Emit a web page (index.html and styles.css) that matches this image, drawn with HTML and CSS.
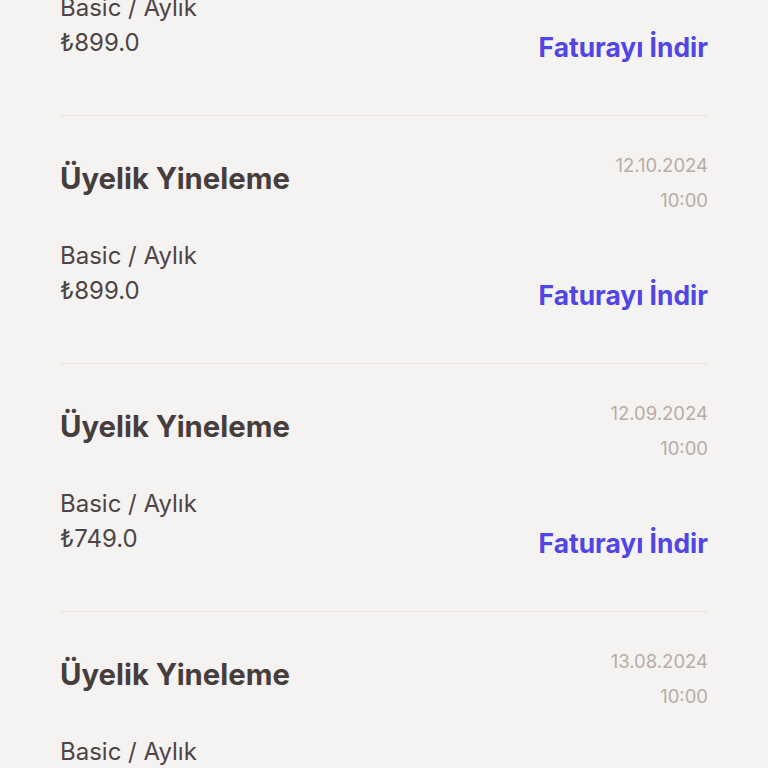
FILE: index.html
```html
<!DOCTYPE html>
<html lang="tr">
<head>
  <meta charset="UTF-8" />
  <meta name="viewport" content="width=device-width, initial-scale=1.0" />
  <title>Ödeme Geçmişi</title>
  <link rel="stylesheet" href="styles.css">
</head>
<body>
  <div class="history">
    <div class="item">
      <div class="item-head">
        <h2 class="item-title">Üyelik Yineleme</h2>
        <div class="item-meta">
          <div>12.11.2024</div>
          <div>10:00</div>
        </div>
      </div>
      <div class="item-body">
        <div class="item-info">
          <div>Basic / Aylık</div>
          <div>₺899.0</div>
        </div>
        <a class="item-link" href="#">Faturayı İndir</a>
      </div>
    </div>

    <div class="item">
      <div class="item-head">
        <h2 class="item-title">Üyelik Yineleme</h2>
        <div class="item-meta">
          <div>12.10.2024</div>
          <div>10:00</div>
        </div>
      </div>
      <div class="item-body">
        <div class="item-info">
          <div>Basic / Aylık</div>
          <div>₺899.0</div>
        </div>
        <a class="item-link" href="#">Faturayı İndir</a>
      </div>
    </div>

    <div class="item">
      <div class="item-head">
        <h2 class="item-title">Üyelik Yineleme</h2>
        <div class="item-meta">
          <div>12.09.2024</div>
          <div>10:00</div>
        </div>
      </div>
      <div class="item-body">
        <div class="item-info">
          <div>Basic / Aylık</div>
          <div>₺749.0</div>
        </div>
        <a class="item-link" href="#">Faturayı İndir</a>
      </div>
    </div>

    <div class="item">
      <div class="item-head">
        <h2 class="item-title">Üyelik Yineleme</h2>
        <div class="item-meta">
          <div>13.08.2024</div>
          <div>10:00</div>
        </div>
      </div>
      <div class="item-body">
        <div class="item-info">
          <div>Basic / Aylık</div>
          <div>₺749.0</div>
        </div>
        <a class="item-link" href="#">Faturayı İndir</a>
      </div>
    </div>
  </div>
</body>
</html>
```

FILE: styles.css
```css
html, body {
  height: 100%;
  overflow: hidden;
}

body {
  margin: 0;
  background: #f5f3f1;
  font-family: Inter, "Noto Sans", sans-serif;
  color: #4d4545;
}

.history {
  margin-top: -132px;
  padding: 0 60px;
}

.item {
  padding: 32px 0 50px;
  border-bottom: 1px solid #e6e2de;
}

.item-head {
  display: flex;
  justify-content: space-between;
  align-items: flex-start;
}

.item-title {
  margin: 13px 0 0;
  font-size: 29.3px;
  line-height: 35px;
  font-weight: 700;
  color: #463d3d;
}

.item-meta {
  text-align: right;
  font-size: 18.5px;
  line-height: 35px;
  color: #b8aca7;
}

.item-body {
  display: flex;
  justify-content: space-between;
  align-items: flex-start;
  margin-top: 20px;
}

.item-info {
  font-size: 24px;
  line-height: 35px;
}

.item-link {
  margin-top: 40px;
  font-size: 26.4px;
  line-height: 35px;
  font-weight: 700;
  color: #4f46e5;
  text-decoration: none;
}
```
